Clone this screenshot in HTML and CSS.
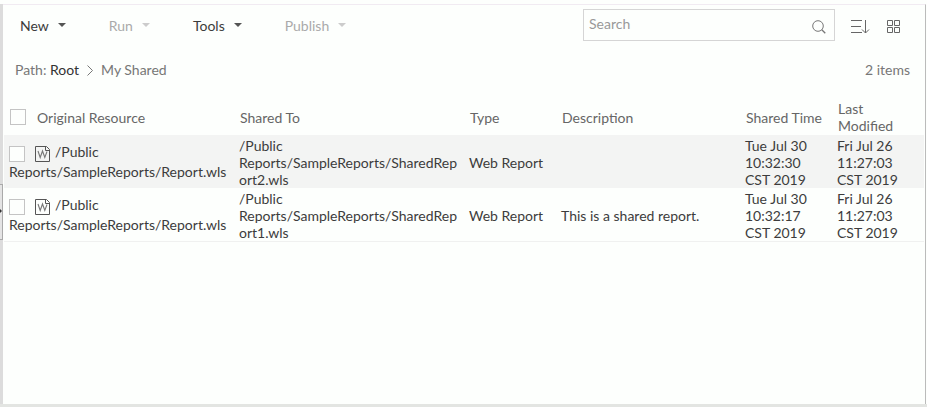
FILE: index.html
```html
<!DOCTYPE html>
<html lang="en">
<head>
<meta charset="utf-8">
<title>My Shared</title>
<link rel="stylesheet" href="styles.css">
</head>
<body>
<svg class="defs" aria-hidden="true">
  <symbol id="report" viewBox="0 0 16 16">
    <path d="M.5.5H11.500L14.500 3.500V15.500H.5ZM10.500.5V4.500H14.500" fill="none" stroke="#555"/>
    <path d="M3 5 5.200 11.500 7.500 5 9.800 11.500 12 5.500" fill="none" stroke="#777" stroke-width="1.1"/>
  </symbol>
</svg>
<div class="app">
  <aside class="splitter"><button class="handle" aria-label="Expand panel"></button></aside>
  <main class="panel">
    <header class="toolbar">
      <nav class="menus">
        <button class="menu">New</button>
        <button class="menu" disabled>Run</button>
        <button class="menu">Tools</button>
        <button class="menu" disabled>Publish</button>
      </nav>
      <div class="tools">
        <div class="search">
          <input type="text" placeholder="Search" aria-label="Search">
          <button class="icon" aria-label="Find">
            <svg width="14" height="14" viewBox="0 0 14 14" fill="none" stroke="#777"><circle cx="6" cy="6" r="5.300"/><path d="M9.800 9.800 13.300 13.300" stroke-width="1.300"/></svg>
          </button>
        </div>
        <button class="icon" aria-label="Sort">
          <svg width="19" height="14" viewBox="0 0 19 14" fill="none" stroke="#666"><path d="M0 .5H11M0 6.500H10M0 12.500H11M14.500 0V13M11 9.500 14.500 13 18 9.500"/></svg>
        </button>
        <button class="icon" aria-label="Thumbnail view">
          <svg width="14" height="14" viewBox="0 0 14 14" fill="none" stroke="#666"><path d="M1.500.5h5v5h-5zM8.500.5h5v5h-5zM1.500 7.500h5v5h-5zM8.500 7.500h5v5h-5z"/></svg>
        </button>
      </div>
    </header>
    <div class="pathbar">
      <div class="path">
        <span>Path: <a href="#">Root</a></span>
        <svg width="6" height="12" viewBox="0 0 6 12" fill="none" stroke="#777"><path d="M.5 1.500 5.500 6.500 .5 11.500"/></svg>
        <span>My Shared</span>
      </div>
      <span>2 items</span>
    </div>
    <table class="list">
      <colgroup><col class="wide"><col class="wide"><col class="narrow"><col class="medium"><col class="narrow"><col class="narrow"></colgroup>
      <thead>
        <tr>
          <th><label class="all"><input type="checkbox"><span>Original Resource</span></label></th>
          <th>Shared To</th><th>Type</th><th>Description</th><th>Shared Time</th><th>Last Modified</th>
        </tr>
      </thead>
      <tbody>
        <tr>
          <td class="resource"><input type="checkbox" id="r1"><svg class="doc"><use href="#report"/></svg><label for="r1">/Public Reports/SampleReports/Report.wls</label></td>
          <td>/Public Reports/SampleReports/SharedReport2.wls</td><td>Web Report</td><td></td>
          <td>Tue Jul 30 10:32:30 CST 2019</td><td>Fri Jul 26 11:27:03 CST 2019</td>
        </tr>
        <tr>
          <td class="resource"><input type="checkbox" id="r2"><svg class="doc"><use href="#report"/></svg><label for="r2">/Public Reports/SampleReports/Report.wls</label></td>
          <td>/Public Reports/SampleReports/SharedReport1.wls</td><td>Web Report</td><td>This is a shared report.</td>
          <td>Tue Jul 30 10:32:17 CST 2019</td><td>Fri Jul 26 11:27:03 CST 2019</td>
        </tr>
      </tbody>
    </table>
  </main>
</div>
</body>
</html>
```
FILE: styles.css
```css
* { box-sizing: border-box; }

body {
  margin: 0;
  background: #fdfffd;
  color: #3c3c3c;
  font: 14px/17px Lato, sans-serif;
}

button, input {
  margin: 0;
  padding: 0;
  border: 0;
  background: none;
  color: inherit;
  font: inherit;
}

.defs { display: none; }

.app {
  display: flex;
  min-height: 100vh;
  padding-top: 4px;
  border-bottom: 3px solid #e3e5e2;
}

.splitter {
  display: flex;
  flex-direction: column;
  justify-content: center;
  width: 3px;
  background: #dcdcdc;
}

.handle {
  position: relative;
  height: 56px;
  margin-top: 16px;
  border: 1px solid #aaa;
  border-left: 0;
  background: #e4e4e4;
}

.handle::before {
  content: "";
  position: absolute;
  top: 24px;
  left: 0;
  border: 2px solid transparent;
  border-left-color: #333;
  border-right: 0;
}

.panel {
  flex: 1;
  margin-right: 1px;
  border-top: 1px solid #f1ebf2;
  border-right: 1px solid #bbb;
}

.toolbar {
  display: flex;
  justify-content: space-between;
  padding: 3px 25px 0 17px;
}

.menus {
  display: flex;
  gap: 43px;
  align-items: center;
  height: 34px;
}

.menu {
  display: flex;
  gap: 9px;
  align-items: center;
}

.menu::after {
  content: "";
  border: 4px solid transparent;
  border-top-color: #555;
  border-bottom: 0;
}

.menu:disabled { color: #aaa; }
.menu:disabled::after { border-top-color: #ccc; }

.tools {
  display: flex;
  align-items: center;
  gap: 16px;
}

.search {
  display: flex;
  align-items: center;
  width: 252px;
  height: 32px;
  padding: 0 8px 0 5px;
  border: 1px solid #d5d5d5;
}

.search input {
  flex: 1;
  min-width: 0;
  height: 30px;
  padding-bottom: 4px;
  outline: 0;
}

.search input::placeholder { color: #999; }

.icon {
  display: flex;
  padding-top: 4px;
}

.pathbar {
  display: flex;
  justify-content: space-between;
  padding: 19px 15px 0 12px;
  color: #777;
}

.path {
  display: flex;
  gap: 8px;
  align-items: center;
}

.path a {
  color: #333;
  text-decoration: none;
}

.list {
  width: calc(100% - 2px);
  margin: 20px 1px 0;
  border-bottom: 1px solid #f0f1f0;
  border-spacing: 0;
  table-layout: fixed;
}

.wide { width: 25%; }
.medium { width: 20%; }
.narrow { width: 10%; }

th, td {
  padding: 2px 5px 0;
  text-align: left;
  vertical-align: middle;
  overflow-wrap: anywhere;
}

th {
  padding: 2px 6px 1px;
  color: #666;
  font-weight: 400;
}

tbody tr:nth-child(odd) { background: #f3f4f3; }

.all {
  display: flex;
  gap: 11px;
  align-items: center;
}

input[type="checkbox"] {
  appearance: none;
  width: 16px;
  height: 16px;
  border: 1px solid #c4c4c4;
  background: #fdfffd;
}

.resource {
  padding-top: 0;
  line-height: 19px;
}

.resource input, .doc { vertical-align: middle; }

.doc {
  width: 16px;
  height: 16px;
  margin: 0 4px 0 10px;
}
```
